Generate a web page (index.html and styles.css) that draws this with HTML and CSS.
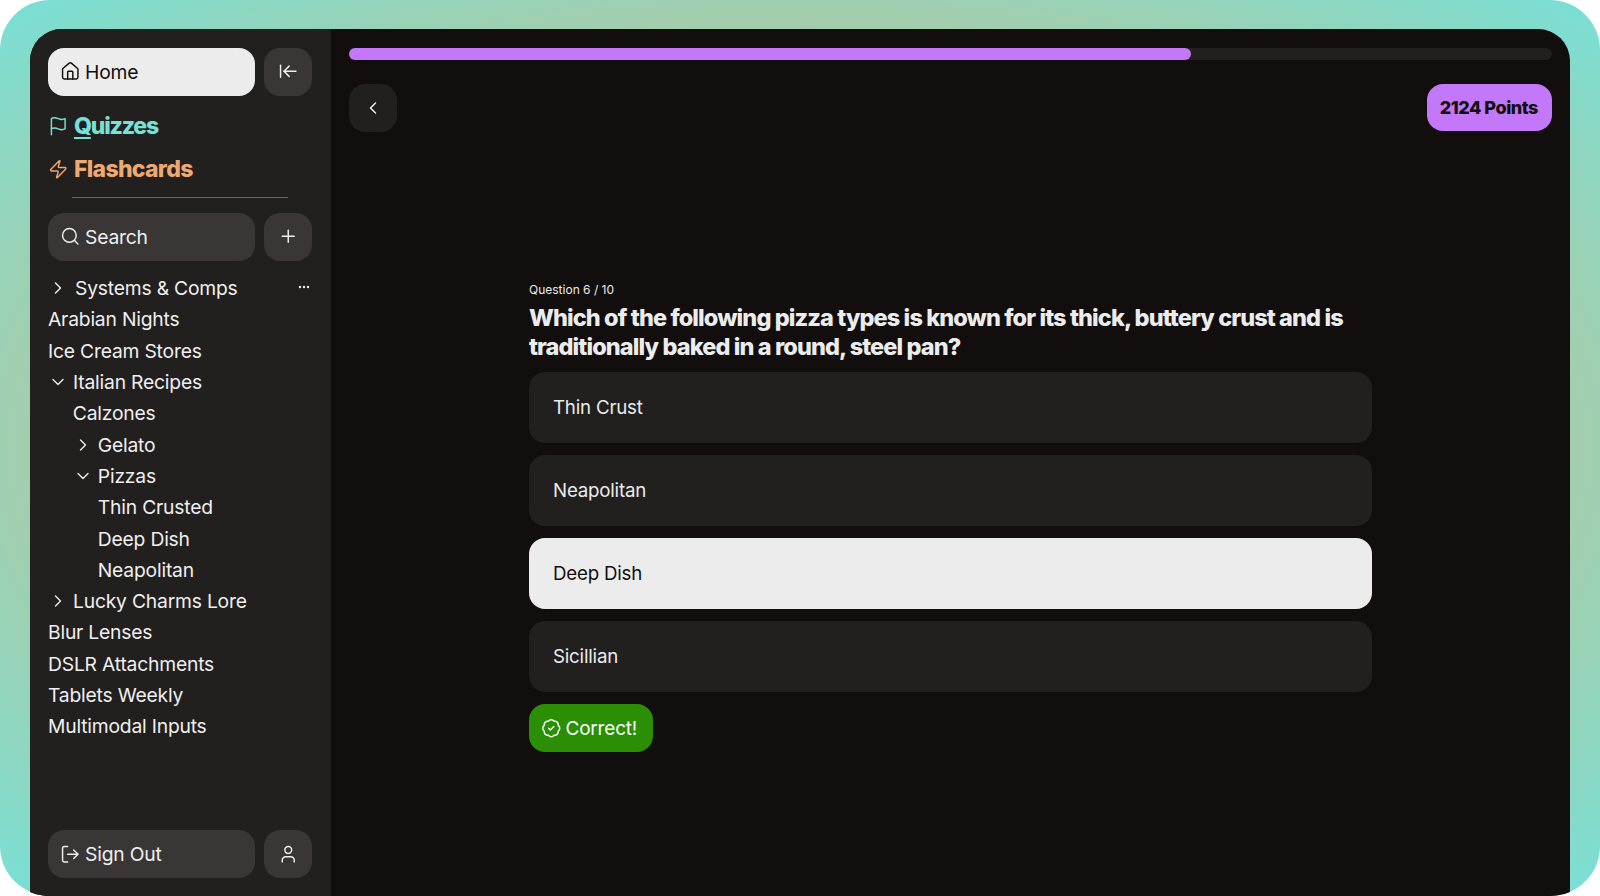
FILE: index.html
```html
<!DOCTYPE html>
<html lang="en">
<head>
<meta charset="utf-8">
<title>Quiz</title>
<link rel="stylesheet" href="styles.css">
</head>
<body>
<div class="frame">
  <div class="window">
    <aside class="sidebar">
      <div class="btn-row">
        <a class="btn btn-wide btn-light">
          <svg class="icon" viewBox="0 0 24 24"><path d="M15 21v-8a1 1 0 0 0-1-1h-4a1 1 0 0 0-1 1v8"/><path d="M3 10a2 2 0 0 1 .709-1.528l7-5.999a2 2 0 0 1 2.582 0l7 5.999A2 2 0 0 1 21 10v9a2 2 0 0 1-2 2H5a2 2 0 0 1-2-2z"/></svg>
          <span>Home</span>
        </a>
        <a class="btn btn-square">
          <svg class="icon" viewBox="0 0 24 24"><path d="M3 19V5"/><path d="m13 6-6 6 6 6"/><path d="M7 12h14"/></svg>
        </a>
      </div>
      <nav class="feature-nav">
        <a class="feature teal">
          <svg class="icon" viewBox="0 0 24 24"><path d="M4 15s1-1 4-1 5 2 8 2 4-1 4-1V3s-1 1-4 1-5-2-8-2-4 1-4 1z"/><path d="M4 22v-7"/></svg>
          <span><span class="q-tail">Q</span>uizzes</span>
        </a>
        <a class="feature orange">
          <svg class="icon" viewBox="0 0 24 24"><path d="M4 14a1 1 0 0 1-.78-1.63l9.9-10.2a.5.5 0 0 1 .86.46l-1.92 6.02A1 1 0 0 0 13 10h7a1 1 0 0 1 .78 1.63l-9.9 10.2a.5.5 0 0 1-.86-.46l1.92-6.02A1 1 0 0 0 11 14z"/></svg>
          <span>Flashcards</span>
        </a>
      </nav>
      <div class="divider"></div>
      <div class="btn-row">
        <a class="btn btn-wide">
          <svg class="icon" viewBox="0 0 24 24"><circle cx="11" cy="11" r="8"/><path d="m21 21-4.3-4.3"/></svg>
          <span>Search</span>
        </a>
        <a class="btn btn-square">
          <svg class="icon" viewBox="0 0 24 24"><path d="M5 12h14"/><path d="M12 5v14"/></svg>
        </a>
      </div>
      <ul class="tree">
        <li class="row row-first">
          <svg class="chev" viewBox="0 0 24 24"><path d="m9 18 6-6-6-6"/></svg>
          <span class="row-label">Systems &amp; Comps</span>
          <svg class="more" viewBox="0 0 12 4"><circle cx="2" cy="2" r="1.2"/><circle cx="6" cy="2" r="1.2"/><circle cx="10" cy="2" r="1.2"/></svg>
        </li>
        <li class="row">Arabian Nights</li>
        <li class="row">Ice Cream Stores</li>
        <li class="row"><svg class="chev" viewBox="0 0 24 24"><path d="m6 9 6 6 6-6"/></svg>Italian Recipes</li>
        <li class="row lvl1">Calzones</li>
        <li class="row lvl1"><svg class="chev" viewBox="0 0 24 24"><path d="m9 18 6-6-6-6"/></svg>Gelato</li>
        <li class="row lvl1"><svg class="chev" viewBox="0 0 24 24"><path d="m6 9 6 6 6-6"/></svg>Pizzas</li>
        <li class="row lvl2">Thin Crusted</li>
        <li class="row lvl2">Deep Dish</li>
        <li class="row lvl2">Neapolitan</li>
        <li class="row"><svg class="chev" viewBox="0 0 24 24"><path d="m9 18 6-6-6-6"/></svg>Lucky Charms Lore</li>
        <li class="row">Blur Lenses</li>
        <li class="row">DSLR Attachments</li>
        <li class="row">Tablets Weekly</li>
        <li class="row">Multimodal Inputs</li>
      </ul>
      <div class="btn-row btn-row-bottom">
        <a class="btn btn-wide">
          <svg class="icon" viewBox="0 0 24 24"><path d="M9 21H5a2 2 0 0 1-2-2V5a2 2 0 0 1 2-2h4"/><path d="m16 17 5-5-5-5"/><path d="M21 12H9"/></svg>
          <span>Sign Out</span>
        </a>
        <a class="btn btn-square">
          <svg class="icon" viewBox="0 0 24 24"><path d="M19 21v-2a4 4 0 0 0-4-4H9a4 4 0 0 0-4 4v2"/><circle cx="12" cy="7" r="4"/></svg>
        </a>
      </div>
    </aside>
    <main class="main">
      <div class="progress"><div class="progress-fill" style="width:70%"></div></div>
      <div class="topbar">
        <a class="back">
          <svg class="chev-back" viewBox="0 0 24 24"><path d="m15 18-6-6 6-6"/></svg>
        </a>
        <div class="points">2124 Points</div>
      </div>
      <section class="quiz">
        <p class="q-count">Question 6 / 10</p>
        <h1 class="q-title">Which of the following pizza types is known for its thick, buttery crust and is traditionally baked in a round, steel pan?</h1>
        <div class="options">
          <div class="option">Thin Crust</div>
          <div class="option">Neapolitan</div>
          <div class="option option-selected">Deep Dish</div>
          <div class="option">Sicillian</div>
        </div>
        <div class="result">
          <svg class="icon" viewBox="0 0 24 24"><path d="M3.85 8.62a4 4 0 0 1 4.78-4.77 4 4 0 0 1 6.74 0 4 4 0 0 1 4.78 4.78 4 4 0 0 1 0 6.74 4 4 0 0 1-4.77 4.78 4 4 0 0 1-6.75 0 4 4 0 0 1-4.78-4.77 4 4 0 0 1 0-6.76Z"/><path d="m9 12 2 2 4-4"/></svg>
          <span>Correct!</span>
        </div>
      </section>
    </main>
  </div>
</div>
</body>
</html>
```
FILE: styles.css
```css
* { box-sizing: border-box; }
html, body { margin: 0; height: 100%; background: #fff; }
body {
  font-family: Inter, "Liberation Sans", sans-serif;
  color: #ececec;
  overflow: hidden;
}
.frame {
  height: 896px;
  padding: 29px 30px 0;
  overflow: hidden;
  border-radius: 50px;
  background: radial-gradient(ellipse farthest-corner at center, #ffa755 0%, #78e0d6 100%);
}
.window {
  height: 100%;
  display: flex;
  overflow: hidden;
  border-radius: 32px 32px 0 0;
  background: #110e0d;
}
.icon {
  width: 20.5px;
  height: 20.5px;
  flex: none;
  fill: none;
  stroke: currentColor;
  stroke-width: 1.7;
  stroke-linecap: round;
  stroke-linejoin: round;
}
.sidebar {
  width: 301px;
  flex: none;
  display: flex;
  flex-direction: column;
  padding: 18.5px 19px 18px 18px;
  background: #221f1f;
}
.btn-row { display: flex; gap: 9.5px; }
.btn-row-bottom { margin-top: auto; }
.btn {
  height: 48px;
  display: flex;
  align-items: center;
  justify-content: center;
  border-radius: 16px;
  background: #3a3636;
  color: #f0f0f0;
  font-size: 19.3px;
  letter-spacing: -0.2px;
}
.btn-wide { flex: 1; justify-content: flex-start; gap: 5px; padding-left: 11.5px; }
.btn-square { width: 48px; flex: none; }
.btn-light { background: #ececec; color: #110e0d; }
.feature-nav { display: flex; flex-direction: column; margin-top: 8.5px; }
.feature {
  height: 43.5px;
  display: flex;
  align-items: center;
  gap: 6px;
  margin-left: -0.5px;
  font-size: 23px;
  font-weight: 800;
  letter-spacing: -0.7px;
}
.teal { color: #78e0d6; letter-spacing: -1.2px; }
.q-tail { text-decoration: underline; text-decoration-thickness: 2px; text-underline-offset: 3px; }
.orange { color: #efa86f; }
.divider { height: 1px; margin: 6px 24px 14.5px; background: #6a6666; }
.tree { list-style: none; margin: 12px 0 0; padding: 0; font-size: 19.3px; letter-spacing: -0.2px; color: #f0f0f0; }
.row { height: 31.3px; display: flex; align-items: center; }
.lvl1 { padding-left: 24.8px; }
.lvl2 { padding-left: 49.8px; }
.chev {
  width: 20px;
  height: 20px;
  flex: none;
  margin-right: 5px;
  fill: none;
  stroke: currentColor;
  stroke-width: 1.6;
  stroke-linecap: round;
  stroke-linejoin: round;
}
.row-first .chev { margin-right: 7px; }
.row-label { flex: 1; }
.more { width: 12px; height: 4px; margin-right: 2px; margin-bottom: 2px; fill: currentColor; }
.main {
  flex: 1;
  min-width: 0;
  display: flex;
  flex-direction: column;
  padding: 18.5px 18px 0;
}
.progress { height: 12px; border-radius: 6px; background: #221f1f; }
.progress-fill { height: 100%; border-radius: 6px; background: #c278f8; }
.topbar {
  display: flex;
  justify-content: space-between;
  align-items: flex-start;
  margin-top: 24.5px;
}
.back {
  width: 48px;
  height: 48px;
  display: flex;
  align-items: center;
  justify-content: center;
  border-radius: 16px;
  background: #221f1f;
  color: #f0f0f0;
}
.chev-back {
  width: 20px;
  height: 20px;
  fill: none;
  stroke: currentColor;
  stroke-width: 1.8;
  stroke-linecap: round;
  stroke-linejoin: round;
}
.points {
  height: 47px;
  display: flex;
  align-items: center;
  padding: 0 14px 0 13px;
  border-radius: 16px;
  background: #c278f8;
  color: #110e0d;
  font-size: 18px;
  font-weight: 800;
  letter-spacing: -0.45px;
}
.quiz { width: 843px; margin: 150px auto 0; }
.q-count { margin: 0; font-size: 12px; line-height: 16px; letter-spacing: 0; }
.q-title {
  margin: 4.5px 0 0;
  font-size: 23.5px;
  font-weight: 800;
  line-height: 29px;
  letter-spacing: -0.9px;
}
.options { display: flex; flex-direction: column; gap: 12px; margin-top: 11.5px; }
.option {
  height: 71px;
  display: flex;
  align-items: center;
  padding-left: 24px;
  border-radius: 16px;
  background: #221f1f;
  font-size: 18.7px;
  letter-spacing: -0.2px;
}
.option-selected { background: #ececec; color: #110e0d; }
.result {
  width: 124px;
  height: 48px;
  display: flex;
  align-items: center;
  gap: 4px;
  margin-top: 12px;
  padding-left: 12px;
  border-radius: 16px;
  background: #2a8f04;
  color: #fff;
  font-size: 19px;
  letter-spacing: -0.2px;
}
```
